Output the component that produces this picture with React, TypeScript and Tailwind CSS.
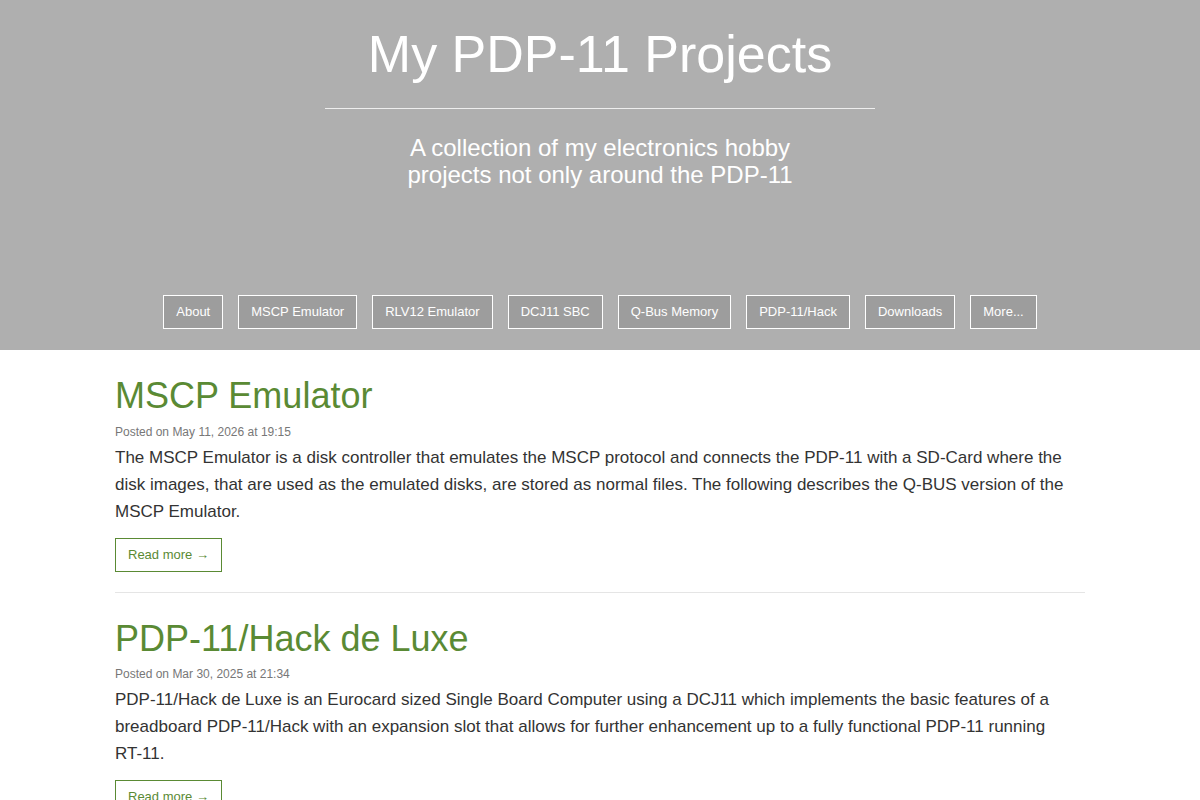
const navItems = [
  "About",
  "MSCP Emulator",
  "RLV12 Emulator",
  "DCJ11 SBC",
  "Q-Bus Memory",
  "PDP-11/Hack",
  "Downloads",
  "More...",
];

const posts = [
  {
    title: "MSCP Emulator",
    date: "Posted on May 11, 2026 at 19:15",
    text: "The MSCP Emulator is a disk controller that emulates the MSCP protocol and connects the PDP-11 with a SD-Card where the disk images, that are used as the emulated disks, are stored as normal files. The following describes the Q-BUS version of the",
    tail: "MSCP Emulator.",
  },
  {
    title: "PDP-11/Hack de Luxe",
    date: "Posted on Mar 30, 2025 at 21:34",
    text: "PDP-11/Hack de Luxe is an Eurocard sized Single Board Computer using a DCJ11 which implements the basic features of a breadboard PDP-11/Hack with an expansion slot that allows for further enhancement up to a fully functional PDP-11 running",
    tail: "RT-11.",
  },
];

const App = () => {
  return (
    <div className="min-h-screen bg-white font-['Liberation_Sans',Arial,sans-serif]">
      <header className="h-[350px] bg-[#afafaf] flex flex-col items-center text-white">
        <h1 className="mt-[26px] text-[52px] leading-[1.1] font-normal">
          My PDP-11 Projects
        </h1>
        <hr className="mt-[25px] w-[550px] border-0 border-t border-[#eeeeee]" />
        <p className="mt-[25px] w-[420px] text-center text-[24px] leading-[27px]">
          A collection of my electronics hobby projects not only around the PDP-11
        </p>
        <nav className="mt-auto mb-[21px] flex gap-[15px]">
          {navItems.map((item) => (
            <a
              key={item}
              href="#"
              className="block border border-white bg-[#9d9d9d] px-3 py-[6px] text-[13px] leading-[20px] text-white"
            >
              {item}
            </a>
          ))}
        </nav>
      </header>

      <main className="w-[970px] mx-auto">
        {posts.map((post) => (
          <article
            key={post.title}
            className="pt-[26px] pb-[20px] border-b border-[#e5e5e5]"
          >
            <h2 className="text-[36px] leading-[1.1] text-[#5a8a34]">
              {post.title}
            </h2>
            <p className="mt-[7px] text-[12px] leading-[18px] text-[#777777]">
              {post.date}
            </p>
            <p className="mt-[3px] text-[17px] leading-[27px] text-[#333333]">
              {post.text} <span className="whitespace-nowrap">{post.tail}</span>
            </p>
            <a
              href="#"
              className="mt-[13px] inline-block border border-[#5a8a34] px-3 py-[6px] text-[13px] leading-[20px] text-[#5a8a34]"
            >
              Read more →
            </a>
          </article>
        ))}
      </main>
    </div>
  );
};

export default App;
